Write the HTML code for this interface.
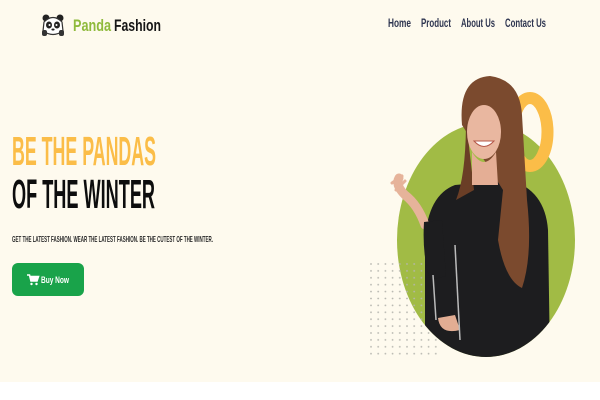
<!DOCTYPE html>
<html><head><meta charset="utf-8"><style>
html,body{margin:0;padding:0;width:600px;height:400px;overflow:hidden;background:#fff}
svg{display:block}
</style></head><body>
<svg width="600" height="400" viewBox="0 0 600 400" xmlns="http://www.w3.org/2000/svg" font-family="Liberation Sans, sans-serif">
<defs>
<clipPath id="ov"><ellipse cx="486" cy="240" rx="89" ry="117"/></clipPath>
<pattern id="dots" x="370" y="263" width="7.2" height="6.9" patternUnits="userSpaceOnUse"><circle cx="1" cy="1" r="0.9" fill="#b5b5ae"/></pattern>
</defs>
<rect x="0" y="0" width="600" height="382" fill="#fefaee"/>
<!-- logo -->
<g transform="translate(42,14)">
<circle cx="4" cy="4" r="3.5" fill="#222"/><circle cx="18" cy="4" r="3.5" fill="#222"/>
<path d="M2 8 Q11 -1 20 8 L21 17 Q11 24 1 17 Z" fill="#fff" stroke="#333" stroke-width="1.2"/>
<ellipse cx="7" cy="11" rx="3" ry="3.5" fill="#222"/><ellipse cx="15" cy="11" rx="3" ry="3.5" fill="#222"/>
<circle cx="7.5" cy="11" r="1" fill="#fff"/><circle cx="14.5" cy="11" r="1" fill="#fff"/>
<ellipse cx="11" cy="15.5" rx="1.6" ry="1" fill="#222"/>
<rect x="0" y="16" width="5" height="6" rx="2" fill="#333"/><rect x="17" y="16" width="5" height="6" rx="2" fill="#333"/>
</g>
<text x="73" y="31" font-size="17" font-weight="bold" fill="#8fba3c" textLength="38" lengthAdjust="spacingAndGlyphs">Panda</text>
<text x="114" y="31" font-size="17" font-weight="bold" fill="#161616" textLength="47" lengthAdjust="spacingAndGlyphs">Fashion</text>
<!-- nav -->
<g font-size="12" font-weight="bold" fill="#2e3550">
<text x="388" y="27" textLength="23" lengthAdjust="spacingAndGlyphs">Home</text>
<text x="421" y="27" textLength="30" lengthAdjust="spacingAndGlyphs">Product</text>
<text x="461" y="27" textLength="34" lengthAdjust="spacingAndGlyphs">About Us</text>
<text x="505" y="27" textLength="41" lengthAdjust="spacingAndGlyphs">Contact Us</text>
</g>
<!-- hero text -->
<text x="12" y="165" font-size="41" font-weight="bold" fill="#fbbd48" textLength="144" lengthAdjust="spacingAndGlyphs">BE THE PANDAS</text>
<text x="12" y="208" font-size="41" font-weight="bold" fill="#0d0d0d" textLength="143" lengthAdjust="spacingAndGlyphs">OF THE WINTER</text>
<text x="12" y="242" font-size="8.5" font-weight="bold" fill="#2a2a2a" textLength="201" lengthAdjust="spacingAndGlyphs">GET THE LATEST FASHION. WEAR THE LATEST FASHION. BE THE CUTEST OF THE WINTER.</text>
<rect x="12" y="263" width="72" height="33" rx="6" fill="#19a34a"/>
<path d="M27 275 h2.5 l1.5 6 h6 l1.5 -4.5 h-8" fill="none" stroke="#fff" stroke-width="1.6"/>
<rect x="30" y="276.5" width="8" height="4" fill="#fff"/>
<circle cx="31.5" cy="284" r="1.2" fill="#fff"/><circle cx="36.5" cy="284" r="1.2" fill="#fff"/>
<text x="41" y="283" font-size="9.5" font-weight="bold" fill="#fff" textLength="28" lengthAdjust="spacingAndGlyphs">Buy Now</text>
<!-- visual -->
<ellipse cx="486" cy="240" rx="89" ry="117" fill="#a1bb45"/>
<ellipse cx="530" cy="132" rx="17.5" ry="34" fill="none" stroke="#fbbd48" stroke-width="12"/>
<rect x="369" y="262" width="68" height="93" fill="url(#dots)"/>
<g clip-path="url(#ov)">
<path d="M425 240 Q428 195 455 185 L510 180 Q545 190 548 230 L550 360 L425 360 Z" fill="#1d1d1f"/>
</g>
<path d="M462 125 Q458 78 490 76 Q520 80 522 115 L527 200 Q533 255 522 288 Q505 280 498 240 L503 190 Z" fill="#7b4a2e"/>
<path d="M466 120 Q466 175 456 200 L474 190 Z" fill="#6a3e26"/>
<ellipse cx="484" cy="132" rx="17" ry="27" fill="#e9b7a0"/>
<path d="M474 141 Q484 152 494 141 Z" fill="#fff" stroke="#b5584a" stroke-width="1"/>
<path d="M472 152 Q484 172 496 152 L498 185 L472 185 Z" fill="#e4ae95"/>
<path d="M399 178 Q395 185 405 195 Q418 205 425 225" fill="none" stroke="#e6b39a" stroke-width="9" stroke-linecap="round"/>
<path d="M392 183 L402 176 M396 190 L405 181" stroke="#e6b39a" stroke-width="3" stroke-linecap="round"/>
<path d="M424 222 Q422 255 430 280 L446 276 L442 220 Z" fill="#1d1d1f"/>
<path d="M438 318 Q440 335 460 330 L455 315 Z" fill="#e2ad93"/>
<line x1="455" y1="245" x2="460" y2="340" stroke="#bbb" stroke-width="1.5"/>
<line x1="433" y1="275" x2="436" y2="320" stroke="#bbb" stroke-width="1.5"/>
</svg>
</body></html>
